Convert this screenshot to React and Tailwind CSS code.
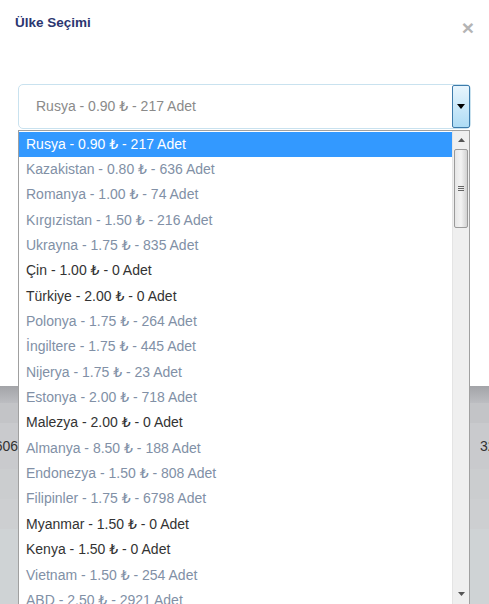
import React from "react";

const items = [
  ["Rusya - 0.90 ₺ - 217 Adet", "sel"],
  ["Kazakistan - 0.80 ₺ - 636 Adet", "g"],
  ["Romanya - 1.00 ₺ - 74 Adet", "g"],
  ["Kırgızistan - 1.50 ₺ - 216 Adet", "g"],
  ["Ukrayna - 1.75 ₺ - 835 Adet", "g"],
  ["Çin - 1.00 ₺ - 0 Adet", "d"],
  ["Türkiye - 2.00 ₺ - 0 Adet", "d"],
  ["Polonya - 1.75 ₺ - 264 Adet", "g"],
  ["İngiltere - 1.75 ₺ - 445 Adet", "g"],
  ["Nijerya - 1.75 ₺ - 23 Adet", "g"],
  ["Estonya - 2.00 ₺ - 718 Adet", "g"],
  ["Malezya - 2.00 ₺ - 0 Adet", "d"],
  ["Almanya - 8.50 ₺ - 188 Adet", "g"],
  ["Endonezya - 1.50 ₺ - 808 Adet", "g"],
  ["Filipinler - 1.75 ₺ - 6798 Adet", "g"],
  ["Myanmar - 1.50 ₺ - 0 Adet", "d"],
  ["Kenya - 1.50 ₺ - 0 Adet", "d"],
  ["Vietnam - 1.50 ₺ - 254 Adet", "g"],
  ["ABD - 2.50 ₺ - 2921 Adet", "g"],
  ["Kanada - 2.50 ₺ - 120 Adet", "g"],
];

export default function App() {
  return (
    <div
      className="relative w-[489px] h-[604px] overflow-hidden bg-white text-[14px]"
      style={{ fontFamily: '"Liberation Sans", Arial, "DejaVu Sans", sans-serif' }}
    >
      {/* modal top */}
      <div className="h-[386px] bg-white flex flex-col">
        <div className="flex justify-between items-start h-[84px]">
          <div className="pl-[15px] pt-[15px] text-[13.5px] font-bold text-[#2b3670] leading-[16px]">
            Ülke Seçimi
          </div>
          <div className="pr-[15px] pt-[18px] text-[21px] font-bold text-[#b4b4b4] leading-[20px]">
            ×
          </div>
        </div>
        <div className="mx-[18px] h-[45px] border border-[#c9e2ef] rounded-[5px] flex items-stretch">
          <div className="flex-1 flex items-center pl-[17px] text-[#8a8a8a]">
            Rusya - 0.90 ₺ - 217 Adet
          </div>
          <div className="w-[18px] border border-[#3d7bab] rounded-[2px] bg-gradient-to-b from-[#e8f5fd] to-[#aedcf5] flex items-center justify-center">
            <svg width="8" height="5" viewBox="0 0 8 5">
              <path d="M0 0H8L4 5Z" fill="#000" />
            </svg>
          </div>
        </div>
      </div>
      {/* gray background page */}
      <div className="flex flex-col h-[218px] bg-[#cfd2d4]">
        <div className="h-[17px] bg-gradient-to-b from-[#a3a4a8] to-[#bcbdc1]" />
        <div className="h-[20px] bg-[#c3c4c7]" />
        <div className="h-[46px] bg-[#c9cacd] flex items-center justify-between text-[#333]">
          <div className="w-[18px] flex justify-end overflow-hidden whitespace-nowrap">606</div>
          <div className="w-[9px] overflow-hidden whitespace-nowrap">32</div>
        </div>
        <div className="h-[30px] bg-[#cbcdcf]" />
        <div className="h-[30px] bg-[#cdcfd1]" />
        <div className="flex-1 bg-[#cfd3d5]" />
      </div>

      {/* dropdown list */}
      <div className="absolute left-[18px] top-[130px] w-[452px] h-[480px] border border-[#a0a0a0] bg-white flex">
        <div className="flex-1 overflow-hidden pt-[0.5px]">
          {items.map(([t, k]) => (
            <div
              key={t}
              className={
                "h-[25.35px] flex items-center pl-[7px] whitespace-nowrap " +
                (k === "sel"
                  ? "bg-[#3399ff] text-white"
                  : k === "d"
                  ? "text-[#333]"
                  : "text-[#8190a6]")
              }
            >
              {t}
            </div>
          ))}
        </div>
        <div className="w-[17px] bg-[#efefef] border-l border-[#e4e4e4] flex flex-col items-center">
          <div className="h-[18px] flex items-center justify-center">
            <svg width="7" height="4" viewBox="0 0 7 4">
              <path d="M3.5 0L7 4H0Z" fill="#555" />
            </svg>
          </div>
          <div className="w-[14px] h-[79px] border border-[#9a9a9a] rounded-[2px] bg-gradient-to-r from-[#e6e6e6] via-[#f3f3f3] to-[#d2d2d2] flex flex-col items-center justify-center gap-[1px]">
            <div className="w-[6px] h-[1px] bg-[#666]" />
            <div className="w-[6px] h-[1px] bg-[#666]" />
            <div className="w-[6px] h-[1px] bg-[#666]" />
          </div>
          <div className="flex-1" />
          <div className="h-[18px] flex items-center justify-center mb-[6px]">
            <svg width="7" height="4" viewBox="0 0 7 4">
              <path d="M0 0H7L3.5 4Z" fill="#555" />
            </svg>
          </div>
        </div>
      </div>
    </div>
  );
}
